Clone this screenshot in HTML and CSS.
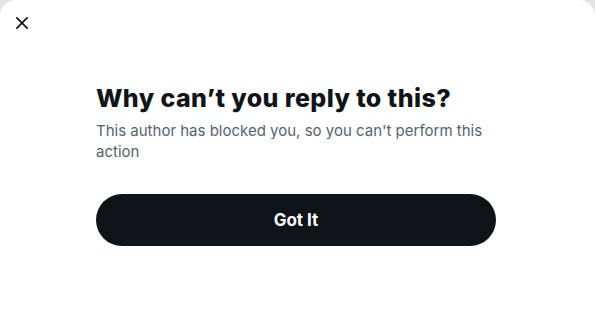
FILE: index.html
```html
<!DOCTYPE html>
<html lang="en">
<head>
<meta charset="utf-8">
<title>Why can't you reply to this?</title>
<link rel="stylesheet" href="styles.css">
</head>
<body>
<div class="modal">
  <div class="topbar">
    <button class="close" aria-label="Close">
      <svg viewBox="0 0 24 24" width="20" height="20" aria-hidden="true"><path d="M10.59 12L4.54 5.96l1.42-1.42L12 10.59l6.04-6.05 1.42 1.42L13.41 12l6.05 6.04-1.42 1.42L12 13.41l-6.04 6.05-1.42-1.42L10.59 12z"/></svg>
    </button>
  </div>
  <div class="content">
    <h1 class="title">Why can’t you reply to this?</h1>
    <p class="desc">This author has blocked you, so you can't perform this action</p>
    <button class="cta">Got It</button>
  </div>
</div>
</body>
</html>
```
FILE: styles.css
```css
html, body {
  margin: 0;
  padding: 0;
  height: 100%;
}
body {
  background: #e4e4e4;
  font-family: Inter, "Liberation Sans", sans-serif;
}
.modal {
  background: #fff;
  height: 100%;
  border-radius: 16px 16px 0 0;
  box-sizing: border-box;
}
.topbar {
  height: 53px;
  display: flex;
  align-items: flex-start;
  padding: 13px 0 0 12px;
  box-sizing: border-box;
}
.close {
  border: 0;
  background: none;
  padding: 0;
  width: 20px;
  height: 20px;
  display: flex;
  cursor: pointer;
}
.close svg {
  fill: #0f1419;
}
.content {
  width: 400px;
  margin-left: 96px;
  display: flex;
  flex-direction: column;
}
.title {
  margin: 31px 0 0;
  font-size: 25px;
  line-height: 28px;
  font-weight: 800;
  color: #0f1419;
  letter-spacing: 0.4px;
}
.desc {
  margin: 8px 0 0;
  font-size: 15px;
  line-height: 21px;
  color: #536471;
}
.cta {
  margin-top: 32px;
  height: 52px;
  border: 0;
  border-radius: 26px;
  background: #0f1419;
  color: #fff;
  font-family: inherit;
  font-size: 17px;
  font-weight: 700;
  cursor: pointer;
}
```
